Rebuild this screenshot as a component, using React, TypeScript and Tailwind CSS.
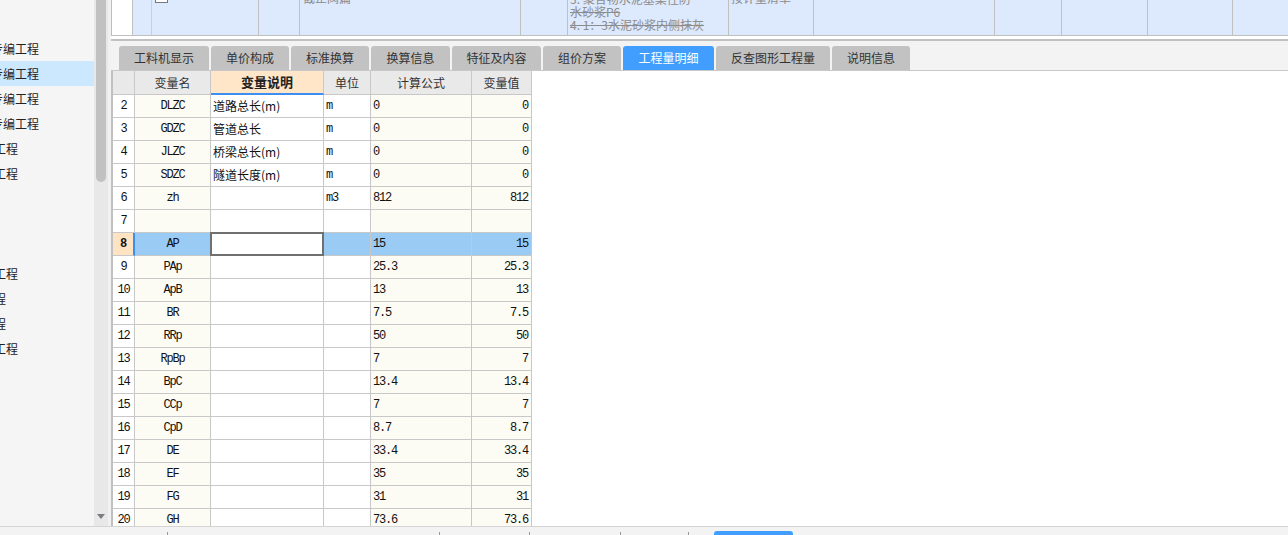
import React from "react";

const CJK = "font-['Noto_Sans_CJK_SC',sans-serif]";
const MONO = "font-['Liberation_Mono','Noto_Sans_CJK_SC',monospace] tracking-[-1.2px]";

type Row = [number, string, string, string, string, string];
const rows: Row[] = [
  [2, "DLZC", "道路总长(m)", "m", "0", "0"],
  [3, "GDZC", "管道总长", "m", "0", "0"],
  [4, "JLZC", "桥梁总长(m)", "m", "0", "0"],
  [5, "SDZC", "隧道长度(m)", "m", "0", "0"],
  [6, "zh", "", "m3", "812", "812"],
  [7, "", "", "", "", ""],
  [8, "AP", "", "", "15", "15"],
  [9, "PAp", "", "", "25.3", "25.3"],
  [10, "ApB", "", "", "13", "13"],
  [11, "BR", "", "", "7.5", "7.5"],
  [12, "RRp", "", "", "50", "50"],
  [13, "RpBp", "", "", "7", "7"],
  [14, "BpC", "", "", "13.4", "13.4"],
  [15, "CCp", "", "", "7", "7"],
  [16, "CpD", "", "", "8.7", "8.7"],
  [17, "DE", "", "", "33.4", "33.4"],
  [18, "EF", "", "", "35", "35"],
  [19, "FG", "", "", "31", "31"],
  [20, "GH", "", "", "73.6", "73.6"],
];

const sideItems: { t: string; ml: string; sel?: boolean }[] = [
  { t: "", ml: "ml-0" },
  { t: "专编工程", ml: "-ml-[9px]" },
  { t: "专编工程", ml: "-ml-[9px]", sel: true },
  { t: "专编工程", ml: "-ml-[9px]" },
  { t: "专编工程", ml: "-ml-[9px]" },
  { t: "工程", ml: "-ml-[6px]" },
  { t: "工程", ml: "-ml-[6px]" },
  { t: "", ml: "ml-0" },
  { t: "", ml: "ml-0" },
  { t: "", ml: "ml-0" },
  { t: "工程", ml: "-ml-[6px]" },
  { t: "工程", ml: "-ml-[18px]" },
  { t: "工程", ml: "-ml-[18px]" },
  { t: "工程", ml: "-ml-[6px]" },
];

const tabs: { t: string; w: string; active?: boolean }[] = [
  { t: "工料机显示", w: "w-[90px]" },
  { t: "单价构成", w: "w-[78px]" },
  { t: "标准换算", w: "w-[78px]" },
  { t: "换算信息", w: "w-[79px]" },
  { t: "特征及内容", w: "w-[89px]" },
  { t: "组价方案", w: "w-[78px]" },
  { t: "工程量明细", w: "w-[91px]", active: true },
  { t: "反查图形工程量", w: "w-[114px]" },
  { t: "说明信息", w: "w-[78px]" },
];

function Sidebar() {
  return (
    <div className={`w-[94px] h-full bg-[#f5f5f5] pt-[11px] overflow-hidden ${CJK}`}>
      {sideItems.map((it, i) => (
        <div
          key={i}
          className={`h-[25px] flex items-center overflow-hidden whitespace-nowrap text-[12px] text-[#222] ${
            it.sel ? "bg-[#cce8ff]" : ""
          }`}
        >
          <span className={it.ml}>{it.t}</span>
        </div>
      ))}
    </div>
  );
}

function Scrollbar() {
  return (
    <div className="w-[14px] h-full bg-[#e8e8e8] flex flex-col">
      <div className="ml-[2px] w-[10px] h-[182px] bg-[#c1c1c1] rounded-b-[5px]" />
      <div className="flex-1" />
      <div className="h-[12px] flex items-start justify-center">
        <svg width="8" height="5" viewBox="0 0 8 5">
          <path d="M0 0 H8 L4 5 Z" fill="#7a7a80" />
        </svg>
      </div>
    </div>
  );
}

function TopRow() {
  const cell = "h-full border-r border-[#c0c0c0] overflow-hidden shrink-0";
  const gray = `text-[12px] leading-[13px] text-[#8c8c8c] line-through whitespace-nowrap ${CJK}`;
  return (
    <div className="h-[36px] flex border-l border-[#bdbdbd] border-b border-b-[#c0c0c0] bg-white">
      <div className={`${cell} w-[21px] bg-white flex justify-center`}>
        <span className={`${MONO} text-[12px] leading-[13px] -mt-[9px] text-[#222]`}>6</span>
      </div>
      <div className={`h-full w-[19px] shrink-0 bg-[#dde9fd] border-r border-[#f3c98c]`} />
      <div className={`${cell} w-[107px] bg-[#dde9fd] flex items-start`}>
        <div className="ml-[3px] -mt-[10px] w-[13px] h-[13px] border border-[#777] bg-white shrink-0" />
        <span className={`${MONO} ml-[5px] -mt-[9px] text-[12px] leading-[13px] text-[#8c8c8c] line-through`}>
          040501004001
        </span>
      </div>
      <div className={`${cell} w-[41px] bg-[#dde9fd]`} />
      <div className={`${cell} w-[221px] bg-[#dde9fd] pl-[3px]`}>
        <div className={`${gray} -mt-[9px]`}>截止阀篇</div>
      </div>
      <div className={`${cell} w-[47px] bg-[#dde9fd] pl-[3px]`}>
        <div className={`${MONO} text-[12px] leading-[13px] text-[#8c8c8c] -mt-[9px]`}>m3</div>
      </div>
      <div className={`${cell} w-[161px] bg-[#dde9fd] pl-[2px]`}>
        <div className={`${gray} -mt-[8px]`}>3. 聚合物水泥基柔性防</div>
        <div className={gray}>水砂浆P6</div>
        <div className={gray}>4. 1：3水泥砂浆内侧抹灰</div>
      </div>
      <div className={`${cell} w-[85px] bg-[#dde9fd] pl-[2px]`}>
        <div className={`${gray} -mt-[9px]`}>按计量清单</div>
      </div>
      <div className={`${cell} w-[181px] bg-[#dde9fd]`} />
      <div className={`${cell} w-[67px] bg-[#dde9fd]`} />
      <div className={`${cell} w-[86px] bg-[#dde9fd] flex justify-end pr-[4px]`}>
        <div className={`${MONO} text-[12px] leading-[13px] text-[#8c8c8c] -mt-[9px]`}>1.00</div>
      </div>
      <div className={`${cell} w-[85px] bg-[#dde9fd] flex justify-end pr-[4px]`}>
        <div className={`${MONO} text-[12px] leading-[13px] text-[#8c8c8c] -mt-[9px]`}>3347.82</div>
      </div>
      <div className="h-full flex-1 bg-[#dde9fd]" />
    </div>
  );
}

function TabBar() {
  return (
    <div className={`h-[30px] bg-[#f3f3f3] border-b border-[#c8c8c8] pt-[5px] pl-[8px] flex gap-[2px] ${CJK}`}>
      {tabs.map((tb) => (
        <div
          key={tb.t}
          className={`${tb.w} h-[24px] rounded-t-[3px] flex items-center justify-center text-[12px] ${
            tb.active ? "bg-[#419efe] text-white" : "bg-[#c2c2c2] text-[#333]"
          }`}
        >
          {tb.t}
        </div>
      ))}
    </div>
  );
}

function Grid() {
  const line = "border-r border-b border-[#c8c8c8]";
  const cream = "bg-[#fcfcf5]";
  return (
    <div className="flex-1 min-h-0 flex overflow-hidden bg-white">
      <div className="w-[2px] h-full bg-[#c0c0c0]" />
      <div className="w-[419px] h-full overflow-hidden">
        <div className={`grid grid-cols-[22px_76px_113px_47px_101px_60px] text-[12px] text-[#111] ${CJK}`}>
          <div className={`${line} h-[24px] bg-[#e9e9e9]`} />
          <div className={`${line} h-[24px] bg-[#e9e9e9] flex items-center justify-center text-[#333]`}>变量名</div>
          <div className="border-r border-[#c8c8c8] border-b-2 border-b-[#3d8ef0] h-[24px] bg-[#ffe6c8] flex items-center justify-center font-bold text-[13px] text-[#222]">
            变量说明
          </div>
          <div className={`${line} h-[24px] bg-[#e9e9e9] flex items-center justify-center text-[#333]`}>单位</div>
          <div className={`${line} h-[24px] bg-[#e9e9e9] flex items-center justify-center text-[#333]`}>计算公式</div>
          <div className={`${line} h-[24px] bg-[#e9e9e9] flex items-center justify-center text-[#333]`}>变量值</div>
          {rows.map((r) => {
            const sel = r[0] === 8;
            const bgC = sel ? "bg-[#99cbf5]" : cream;
            const bgW = sel ? "bg-[#99cbf5]" : "bg-white";
            return (
              <React.Fragment key={r[0]}>
                <div
                  className={`${line} h-[23px] flex items-center justify-center ${MONO} text-[12px] ${
                    sel ? "bg-[#ffe4c4] font-bold border-r-[#3d8ef0] border-r-2" : "bg-white"
                  }`}
                >
                  {r[0]}
                </div>
                <div className={`${line} h-[23px] ${bgC} flex items-center justify-center ${MONO} text-[12px]`}>
                  {r[1]}
                </div>
                <div className={`${line} h-[23px] ${sel ? "bg-white relative" : "bg-white"} flex items-center pl-[2px] whitespace-nowrap`}>
                  {sel && (
                    <div className="absolute -left-px -top-px -right-px -bottom-px border-2 border-[#707070]" />
                  )}
                  {r[2]}
                </div>
                <div className={`${line} h-[23px] ${bgW} flex items-center pl-[2px] ${MONO} text-[12px]`}>
                  {r[3]}
                </div>
                <div className={`${line} h-[23px] ${bgC} flex items-center pl-[2px] ${MONO} text-[12px]`}>
                  {r[4]}
                </div>
                <div className={`${line} h-[23px] ${bgC} flex items-center justify-end pr-[3px] ${MONO} text-[12px]`}>
                  {r[5]}
                </div>
              </React.Fragment>
            );
          })}
        </div>
      </div>
      <div className="flex-1 h-full bg-white" />
    </div>
  );
}

function BottomStrip() {
  const tick = "w-px h-[3px] bg-[#9a9a9a]";
  return (
    <div className="h-[8px] bg-[#f3f3f3] flex items-end">
      <div className="w-[167px]" />
      <div className={tick} />
      <div className="w-[271px]" />
      <div className={tick} />
      <div className="w-[89px]" />
      <div className={tick} />
      <div className="w-[90px]" />
      <div className={tick} />
      <div className="w-[67px]" />
      <div className={tick} />
      <div className="w-[25px]" />
      <div className="w-[79px] h-[4px] rounded-t-[3px] bg-[#419efe]" />
    </div>
  );
}

export default function App() {
  return (
    <div className="w-[1288px] h-[535px] flex flex-col bg-white overflow-hidden">
      <div className="h-[526px] flex">
        <Sidebar />
        <Scrollbar />
        <div className="w-[3px] h-full bg-[#f1f1f1]" />
        <div className="flex-1 min-w-0 h-full flex flex-col">
          <TopRow />
          <div className="h-[3px] bg-white" />
          <div className="h-[2px] bg-[#c0c0c0]" />
          <TabBar />
          <Grid />
        </div>
      </div>
      <div className="h-px bg-[#d4d4d4]" />
      <BottomStrip />
    </div>
  );
}
